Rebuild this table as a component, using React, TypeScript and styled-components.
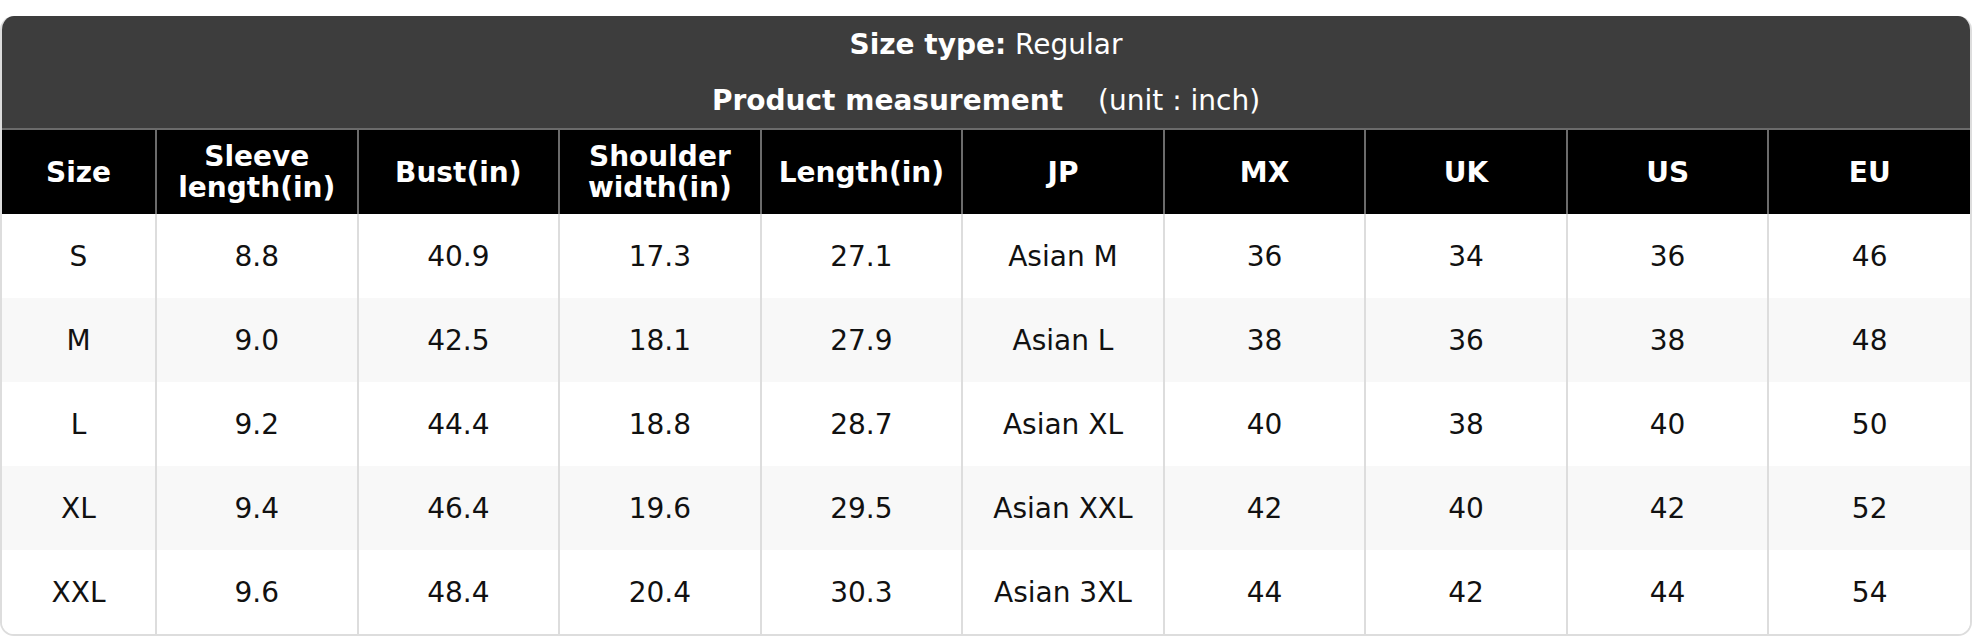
import styled, { createGlobalStyle } from "styled-components";

const GlobalStyle = createGlobalStyle`
  html, body {
    margin: 0;
    padding: 0;
    background: #ffffff;
  }
  body {
    font-family: "DejaVu Sans", Verdana, sans-serif;
  }
`;

const Page = styled.div`
  padding-top: 16px;
`;

const Card = styled.div`
  width: 1972px;
  box-sizing: border-box;
  border: 2px solid #dddddd;
  border-top: none;
  border-radius: 14px;
  overflow: hidden;
  background: #ffffff;
`;

const TitleBlock = styled.div`
  background: #3d3d3d;
  color: #ffffff;
  display: flex;
  flex-direction: column;
`;

const TitleLine = styled.div`
  height: 56px;
  display: flex;
  align-items: center;
  justify-content: center;
  font-size: 28px;
  white-space: pre;
`;

const Strong = styled.b`
  font-weight: 700;
`;

const Unit = styled.span`
  margin-left: 26px;
`;

const Table = styled.table`
  width: 100%;
  border-collapse: collapse;
  table-layout: fixed;
  font-size: 28px;
`;

const HeadCell = styled.th<{ $first?: boolean }>`
  box-sizing: border-box;
  width: ${(p) => (p.$first ? "154px" : "auto")};
  height: 85px;
  padding: 0 6px;
  background: #000000;
  color: #ffffff;
  font-weight: 700;
  text-align: center;
  vertical-align: middle;
  line-height: 31px;
  border: 2px solid #6b6b6b;
  border-bottom: none;
  &:first-child {
    border-left: none;
  }
  &:last-child {
    border-right: none;
  }
`;

const Row = styled.tr<{ $striped: boolean }>`
  background: ${(p) => (p.$striped ? "#f8f8f8" : "#ffffff")};
`;

const Cell = styled.td`
  height: 84px;
  padding: 0;
  color: #111111;
  text-align: center;
  vertical-align: middle;
  border-left: 2px solid #dddddd;
  border-right: 2px solid #dddddd;
  &:first-child {
    border-left: none;
  }
  &:last-child {
    border-right: none;
  }
`;

const headers = [
  "Size",
  "Sleeve length(in)",
  "Bust(in)",
  "Shoulder width(in)",
  "Length(in)",
  "JP",
  "MX",
  "UK",
  "US",
  "EU",
];

const rows = [
  ["S", "8.8", "40.9", "17.3", "27.1", "Asian M", "36", "34", "36", "46"],
  ["M", "9.0", "42.5", "18.1", "27.9", "Asian L", "38", "36", "38", "48"],
  ["L", "9.2", "44.4", "18.8", "28.7", "Asian XL", "40", "38", "40", "50"],
  ["XL", "9.4", "46.4", "19.6", "29.5", "Asian XXL", "42", "40", "42", "52"],
  ["XXL", "9.6", "48.4", "20.4", "30.3", "Asian 3XL", "44", "42", "44", "54"],
];

function App() {
  return (
    <Page>
      <GlobalStyle />
      <Card>
        <TitleBlock>
          <TitleLine>
            <Strong>Size type:</Strong> Regular
          </TitleLine>
          <TitleLine>
            <Strong>Product measurement</Strong>
            <Unit> (unit : inch)</Unit>
          </TitleLine>
        </TitleBlock>
        <Table>
          <thead>
            <tr>
              {headers.map((h, i) => (
                <HeadCell key={h} $first={i === 0}>
                  {h}
                </HeadCell>
              ))}
            </tr>
          </thead>
          <tbody>
            {rows.map((r, i) => (
              <Row key={r[0]} $striped={i % 2 === 1}>
                {r.map((v, j) => (
                  <Cell key={j}>{v}</Cell>
                ))}
              </Row>
            ))}
          </tbody>
        </Table>
      </Card>
    </Page>
  );
}

export default App;
